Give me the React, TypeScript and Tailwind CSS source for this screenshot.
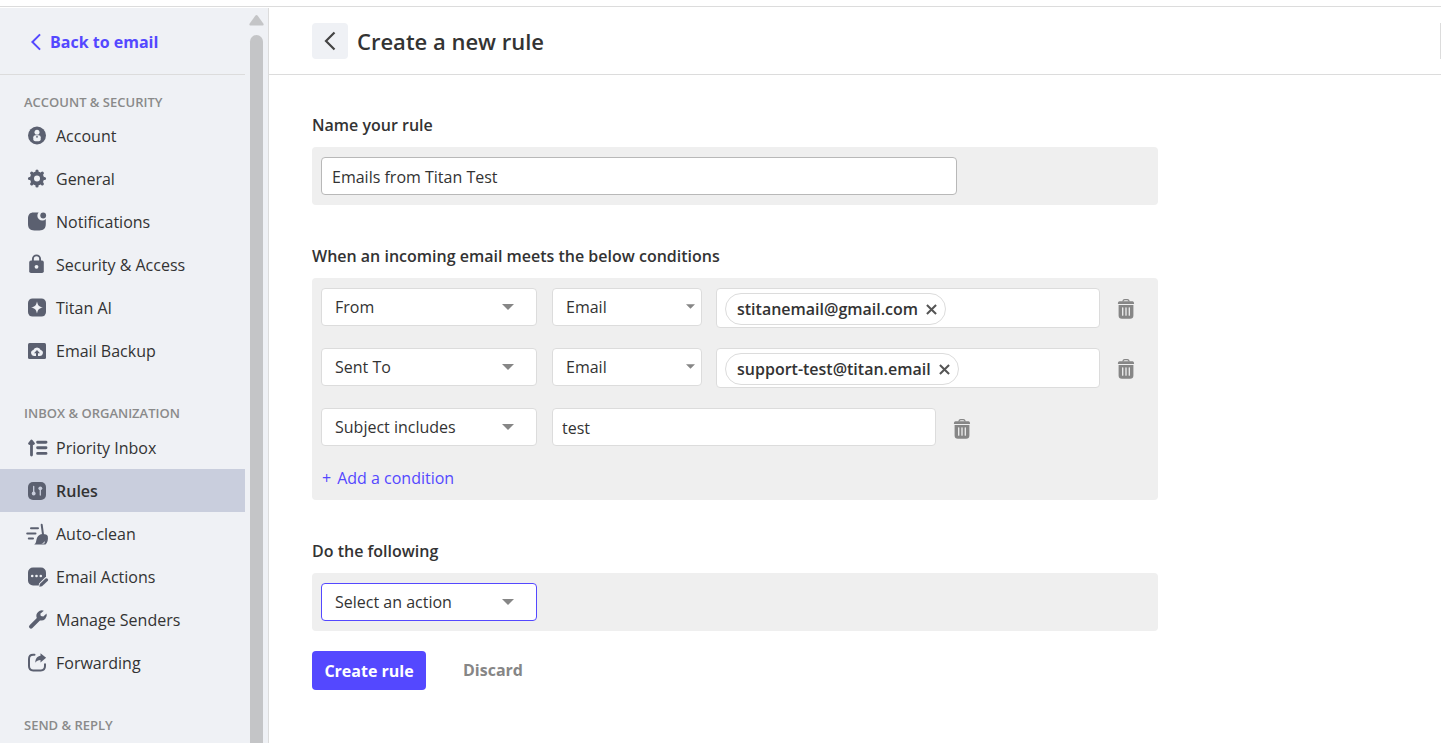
import { useState, type ReactNode } from "react";

const accountItems = [
  { label: "Account", icon: <AccountIcon /> },
  { label: "General", icon: <GearIcon /> },
  { label: "Notifications", icon: <NotificationIcon /> },
  { label: "Security & Access", icon: <LockIcon /> },
  { label: "Titan AI", icon: <SparkIcon /> },
  { label: "Email Backup", icon: <BackupIcon /> },
];

const inboxItems = [
  { label: "Priority Inbox", icon: <PriorityIcon /> },
  { label: "Rules", icon: <RulesIcon />, active: true },
  { label: "Auto-clean", icon: <BroomIcon /> },
  { label: "Email Actions", icon: <ActionsIcon /> },
  { label: "Manage Senders", icon: <WrenchIcon /> },
  { label: "Forwarding", icon: <ForwardIcon /> },
];

function Glyph({ children }: { children: ReactNode }) {
  return (
    <svg width="24" height="24" viewBox="0 0 24 24" fill="#5b6070" aria-hidden="true">
      {children}
    </svg>
  );
}

function AccountIcon() {
  return (
    <Glyph>
      <circle cx="12" cy="11.500" r="9" />
      <circle cx="12" cy="8.200" r="2.500" fill="#eff1f5" />
      <rect x="8.300" y="11.200" width="7.400" height="6" rx="2" fill="#eff1f5" />
      <circle cx="12" cy="12.800" r=".9" />
    </Glyph>
  );
}

function GearIcon() {
  return (
    <Glyph>
      <circle cx="12" cy="11.500" r="5" fill="none" stroke="#5b6070" strokeWidth="4" />
      <g stroke="#5b6070" strokeWidth="3.2" strokeLinecap="round">
        <path d="M12 4.500v-.5M12 18.500v.5M5 11.500h-.5M19 11.500h.5M7 6.500l-.3-.3M17 16.500l.3.3M7 16.500l-.3.3M17 6.500l.3-.3" />
      </g>
    </Glyph>
  );
}

function NotificationIcon() {
  return (
    <Glyph>
      <path d="M8.4 2.500h5.200a4.600 4.600 0 0 0 7.200 6.500v5.100C20.800 18.500 18.800 20.500 14.500 20.500H9.300C5 20.500 3 18.500 3 14.100V8.700C3 4.500 5 2.500 8.400 2.500z" />
      <circle cx="18.200" cy="5.500" r="2.900" />
    </Glyph>
  );
}

function LockIcon() {
  return (
    <Glyph>
      <path d="M7.900 9V6a3.600 3.600 0 0 1 7.200 0v3" fill="none" stroke="#5b6070" strokeWidth="1.900" />
      <rect x="4.200" y="7.600" width="14.600" height="12.500" rx="1.800" />
      <circle cx="11.500" cy="13.800" r="1.900" fill="#eff1f5" />
    </Glyph>
  );
}

function SparkIcon() {
  return (
    <Glyph>
      <rect x="3" y="2.500" width="18" height="18" rx="4.500" />
      <path d="M12 5.500c.9 4 2 5.100 6 6-4 .9-5.100 2-6 6-.9-4-2-5.100-6-6 4-.9 5.100-2 6-6z" fill="#eff1f5" />
    </Glyph>
  );
}

function BackupIcon() {
  return (
    <Glyph>
      <rect x="3" y="4" width="18" height="16" rx="1.500" />
      <path d="M9 17a3 3 0 0 1-.7-5.900 3.900 3.900 0 0 1 7.400 0 3 3 0 0 1-.7 5.900z" fill="#eff1f5" />
      <path d="M12 11.100l-3 3.200h2v3.400h2v-3.400h2z" />
    </Glyph>
  );
}

function PriorityIcon() {
  return (
    <Glyph>
      <path d="M6.500 19V6.500M4.500 7.500l2-2.500 2 2.500" fill="none" stroke="#5b6070" strokeWidth="2.800" strokeLinecap="round" strokeLinejoin="round" />
      <path d="M12.600 6.200h8.400M12.600 11.800h8.400M12.600 17.400h8.400" stroke="#5b6070" strokeWidth="2.900" strokeLinecap="round" />
    </Glyph>
  );
}

function RulesIcon() {
  return (
    <Glyph>
      <rect x="3" y="3" width="18" height="18" rx="5" />
      <path d="M8.700 7.500v6M15.300 11v5" stroke="#c9cedd" strokeWidth="1.300" strokeLinecap="round" />
      <circle cx="8.700" cy="14.500" r="1.900" fill="#c9cedd" />
      <circle cx="15.300" cy="9.300" r="1.900" fill="#c9cedd" />
    </Glyph>
  );
}

function BroomIcon() {
  return (
    <Glyph>
      <path d="M6 6.300h7M2.200 11.500h8.300M3.800 16.400H8" stroke="#5b6070" strokeWidth="2" strokeLinecap="round" />
      <path d="M16.700 2.800l1.300 9.500" stroke="#5b6070" strokeWidth="2" strokeLinecap="round" />
      <path d="M14.500 13c2-1.700 7.500-1.400 8.300 1.200.6 3.400-.4 6.200-2.300 8.400H9.200c2-1.500 1.800-3 2.300-5.200.5-2 1.500-3.300 3-4.400z" />
      <path d="M16.300 21.800c1.800-.6 3-1.700 3.900-3.400l-.9 3.200z" fill="#eff1f5" />
    </Glyph>
  );
}

function ActionsIcon() {
  return (
    <Glyph>
      <rect x="3" y="2.500" width="18" height="18" rx="5" />
      <path d="M13.600 22l.4-3.500 6.500-6.500h3.500v3l-7 7.500h-4z" fill="#eff1f5" />
      <path d="M14.300 21.700l.5-2.600 5.700-5.600a1.700 1.700 0 0 1 2.400 2.300L17 21.200z" />
      <g fill="#eff1f5">
        <circle cx="7.200" cy="11" r="1.300" />
        <circle cx="11.500" cy="11" r="1.300" />
        <circle cx="15.800" cy="11" r="1.300" />
      </g>
    </Glyph>
  );
}

function WrenchIcon() {
  return (
    <Glyph>
      <path d="M6 18.700l7.500-7.500" stroke="#5b6070" strokeWidth="4" strokeLinecap="round" />
      <path d="M18.800 2.700a5.600 5.600 0 0 0-7.200 6.900 5.400 5.400 0 0 0 3 2.700 5.600 5.600 0 0 0 7-6.900l-3.300 3.200-2.500-.5-.5-2.300z" />
    </Glyph>
  );
}

function ForwardIcon() {
  return (
    <Glyph>
      <path d="M9.500 3.700H8.200C5.300 3.700 4 5.200 4 7.900v7.200c0 2.900 1.300 4.400 4.200 4.400h7.600c2.900 0 4.200-1.500 4.200-4.400v-1.900" fill="none" stroke="#5b6070" strokeWidth="2" strokeLinecap="round" />
      <path d="M15.500 2.300l5.600 4.500-5.600 4.600V8.900c-2.300 0-4 .8-5.200 2.800.1-4.200 2-6.400 5.200-6.900z" />
    </Glyph>
  );
}

function TrashIcon() {
  return (
    <svg width="18" height="20" viewBox="0 0 18 20" fill="#868686" aria-hidden="true">
      <path d="M5.700 2.600C6 1.300 6.700.6 7.700.6h2.600c1 0 1.700.7 2 2" fill="none" stroke="#868686" strokeWidth="1.200" />
      <path d="M2.500 2.300h13c1 0 1.600.8 1.600 2.600H.9c0-1.800.6-2.600 1.600-2.600z" />
      <path d="M1.600 6.100h14.800v10.300c0 2.200-1.100 3.300-3.300 3.300H4.900c-2.200 0-3.300-1.100-3.300-3.300z" />
      <path d="M5.700 8.800v7.400M9 8.800v7.400M12.300 8.800v7.400" stroke="#efefef" strokeWidth="1.300" strokeLinecap="round" />
    </svg>
  );
}

function Chevron({ className }: { className: string }) {
  return (
    <svg width="12" height="20" viewBox="0 0 12 20" fill="none" stroke="currentColor" strokeWidth="2.200" className={className} aria-hidden="true">
      <path d="M10.500 1.500L2 10l8.500 8.500" />
    </svg>
  );
}

type NavItem = { label: string; icon: ReactNode; active?: boolean };

function NavList({ items }: { items: NavItem[] }) {
  return (
    <ul>
      {items.map((item) => (
        <li key={item.label}>
          <a
            href="#"
            className={`flex h-[43px] items-center gap-[7px] pl-[25px] text-[16px] ${
              item.active ? "bg-[#c9cedd] font-semibold" : ""
            }`}
          >
            {item.icon}
            {item.label}
          </a>
        </li>
      ))}
    </ul>
  );
}

function Sidebar() {
  return (
    <aside className="flex w-[269px] shrink-0 border-r border-[#dcdcdc] bg-[#eff1f5]">
      <nav className="w-[245px]">
        <a
          href="#"
          className="flex h-[67px] items-center gap-2 border-b border-[#dcdcdc] pt-px pl-[30px] text-[16px] font-bold text-[#5448ff]"
        >
          <Chevron className="h-[18px] w-3" />
          Back to email
        </a>
        <h2 className="mt-[19px] mb-1 pl-6 text-[13px] leading-4 font-semibold text-[#8a8a8a]">
          ACCOUNT &amp; SECURITY
        </h2>
        <NavList items={accountItems} />
        <h2 className="mt-[33px] mb-[5px] pl-6 text-[13px] leading-4 font-semibold text-[#8a8a8a]">
          INBOX &amp; ORGANIZATION
        </h2>
        <NavList items={inboxItems} />
        <h2 className="mt-[33px] pl-6 text-[13px] leading-4 font-semibold text-[#8a8a8a]">
          SEND &amp; REPLY
        </h2>
      </nav>
      {/* Scrollbar */}
      <div className="flex w-[23px] flex-col items-center gap-[9px] pt-[7px]">
        <svg width="15" height="11" viewBox="0 0 15 11" fill="#c4c5c7" className="shrink-0" aria-hidden="true">
          <path d="M6.300.8a1.500 1.500 0 0 1 2.400 0l5.600 7.800c.7 1 .2 2-.9 2H1.600c-1.100 0-1.600-1-.9-2z" />
        </svg>
        <div className="w-[13px] grow rounded-t-full bg-[#c4c5c7]" />
      </div>
    </aside>
  );
}

type DropdownProps = {
  label: string;
  value: string;
  small?: boolean;
  highlighted?: boolean;
};

function Dropdown({ label, value, small, highlighted }: DropdownProps) {
  return (
    <div className={`relative h-[38px] shrink-0 ${small ? "w-[150px]" : "w-[216px]"}`}>
      <select
        aria-label={label}
        defaultValue={value}
        className={`h-full w-full appearance-none rounded border bg-white pr-8 pb-px pl-[13px] text-[16px] ${
          highlighted ? "border-[#5448ff]" : "border-[#dcdcdc]"
        }`}
      >
        <option>{value}</option>
      </select>
      <svg
        viewBox="0 0 12 6"
        fill="#868686"
        className={`pointer-events-none absolute ${
          small ? "top-4 right-[7px] h-[5px] w-[9px]" : "top-4 right-[23px] h-[6px] w-3"
        }`}
        aria-hidden="true"
      >
        <path d="M0 0h12L6 6z" />
      </svg>
    </div>
  );
}

function AddressField({ address }: { address: string }) {
  return (
    <div className="flex h-10 min-w-0 basis-[384px] items-center rounded border border-[#dcdcdc] bg-white px-2 pt-px">
      <span className="flex h-8 shrink-0 items-center gap-2 rounded-full border border-[#dcdcdc] pr-2 pl-[11px] text-[16px] font-semibold whitespace-nowrap">
        {address}
        <button type="button" aria-label={`Remove ${address}`} className="pt-[2px]">
          <svg width="11" height="11" viewBox="0 0 12 12" stroke="#555" strokeWidth="2.200" aria-hidden="true">
            <path d="M1 1l10 10M11 1L1 11" />
          </svg>
        </button>
      </span>
      <input aria-label="Add address" className="w-full min-w-0 outline-none" />
    </div>
  );
}

function DeleteButton() {
  return (
    <button type="button" aria-label="Delete condition" className="ml-[17px] h-[42px] shrink-0">
      <TrashIcon />
    </button>
  );
}

function AddressCondition({ field, address }: { field: string; address: string }) {
  return (
    <div className="flex h-[60px] items-start">
      <Dropdown label="Field" value={field} />
      <div className="w-[15px] shrink-0" />
      <Dropdown label="Match type" value="Email" small />
      <div className="w-[14px] shrink-0" />
      <AddressField address={address} />
      <DeleteButton />
    </div>
  );
}

export default function App() {
  const [name, setName] = useState("Emails from Titan Test");
  const [subject, setSubject] = useState("test");

  return (
    <div className="flex min-h-screen flex-col bg-white font-['Open_Sans','Noto_Sans',sans-serif] text-[#333]">
      <div className="mb-px h-[7px] border-b border-[#dcdcdc]" />
      <div className="flex grow">
        <Sidebar />
        <main className="min-w-0 grow">
          <header className="flex h-[67px] items-center border-b border-[#dcdcdc] pl-[43px]">
            <button type="button" aria-label="Go back" className="flex size-9 items-center justify-center rounded bg-[#eff1f5] text-[#444]">
              <Chevron className="h-5 w-3" />
            </button>
            <h1 className="ml-[9px] grow text-[22px] font-semibold">Create a new rule</h1>
            <div className="h-9 w-px bg-[#dcdcdc]" />
          </header>

          <form className="max-w-[932px] px-[43px] pt-[38px]">
            {/* Rule name */}
            <label htmlFor="rule-name" className="block text-[16px] leading-6 font-semibold">
              Name your rule
            </label>
            <div className="mt-[10px] rounded bg-[#efefef] p-[10px] pl-[9px]">
              <input
                id="rule-name"
                value={name}
                onChange={(e) => setName(e.target.value)}
                className="block h-[38px] w-full max-w-[636px] rounded border border-[#b8b8b8] bg-white px-[10px] pt-px text-[16px]"
              />
            </div>

            {/* Conditions */}
            <h2 className="mt-[39px] text-[16px] leading-6 font-semibold">
              When an incoming email meets the below conditions
            </h2>
            <div className="mt-[10px] rounded bg-[#efefef] p-[10px] pl-[9px]">
              <AddressCondition field="From" address="stitanemail@gmail.com" />
              <AddressCondition field="Sent To" address="support-test@titan.email" />
              <div className="flex h-[60px] items-start gap-[15px]">
                <Dropdown label="Field" value="Subject includes" />
                <div className="flex min-w-0 items-start">
                  <input
                    aria-label="Subject text"
                    value={subject}
                    onChange={(e) => setSubject(e.target.value)}
                    className="h-[38px] w-[384px] min-w-0 rounded border border-[#dcdcdc] bg-white px-[9px] pt-px text-[16px]"
                  />
                  <DeleteButton />
                </div>
              </div>
              <button type="button" className="flex h-[22px] gap-[6px] pl-px text-[16px] leading-5 text-[#5448ff]">
                <span>+</span>
                <span>Add a condition</span>
              </button>
            </div>

            {/* Action */}
            <h2 className="mt-[39px] text-[16px] leading-6 font-semibold">Do the following</h2>
            <div className="mt-[10px] rounded bg-[#efefef] p-[10px] pl-[9px]">
              <Dropdown label="Action" value="Select an action" highlighted />
            </div>

            <div className="mt-5 flex items-center">
              <button type="button" className="h-[39px] w-[114px] rounded bg-[#5448ff] text-[16px] font-bold text-white">
                Create rule
              </button>
              <button type="button" className="ml-[37px] pb-[2px] text-[16px] font-bold text-[#868686]">
                Discard
              </button>
            </div>
          </form>
        </main>
      </div>
    </div>
  );
}
